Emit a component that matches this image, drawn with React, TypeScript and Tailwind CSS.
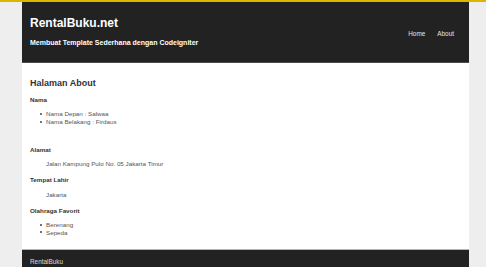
const font = { fontFamily: '"Liberation Sans", Arial, sans-serif' };

const Header = () => (
  <header className="h-[61px] bg-[#222222] border-b border-[#4a4a4a] flex justify-between px-[8px]">
    <div className="pt-[14px]">
      <h1 className="text-[12px] leading-[14px] font-bold text-white">RentalBuku.net</h1>
      <p className="mt-[8px] text-[7px] leading-[9px] font-bold text-white">
        Membuat Template Sederhana dengan Codeigniter
      </p>
    </div>
    <nav className="flex items-center gap-[12px] pr-[7px] pt-[3px] text-[6.4px] text-[#e5e5e5]">
      <a href="#">Home</a>
      <a href="#">About</a>
    </nav>
  </header>
);

const Label = ({ children, className = '' }: { children: React.ReactNode; className?: string }) => (
  <h3 className={'text-[6.25px] leading-[8px] font-bold text-[#333333] ' + className}>{children}</h3>
);

const Bullets = ({ items, className = '' }: { items: string[]; className?: string }) => (
  <ul className={'pl-[10px] ' + className}>
    {items.map((item) => (
      <li key={item} className="flex items-center gap-[4px]">
        <span className="w-[2px] h-[2px] rounded-full bg-[#444444]" />
        {item}
      </li>
    ))}
  </ul>
);

export default function App() {
  return (
    <div style={font} className="min-h-[267px] bg-[#eeeeee] border-t-2 border-[#d9b600]">
      <div className="ml-[22px] w-[447px]">
        <Header />
        <main className="bg-white px-[8px] pt-[15px] pb-[13px] text-[6.25px] leading-[7.7px] text-[#555555]">
          <h2 className="text-[9px] leading-[11px] font-bold text-[#333333]">Halaman About</h2>
          <Label className="mt-[7px]">Nama</Label>
          <Bullets className="mt-[6px]" items={['Nama Depan : Salwaa', 'Nama Belakang : Firdaus']} />
          <Label className="mt-[21px]">Alamat</Label>
          <p className="pl-[16px] mt-[6px]">Jalan Kampung Pulo No. 05 Jakarta Timur</p>
          <Label className="mt-[8px]">Tempat Lahir</Label>
          <p className="pl-[16px] mt-[7px]">Jakarta</p>
          <Label className="mt-[8px]">Olahraga Favorit</Label>
          <Bullets className="mt-[6px]" items={['Berenang', 'Sepeda']} />
        </main>
        <footer className="bg-[#222222] border-t border-[#b5b5b5] px-[8px] pt-[8px] pb-[10px] text-[6.4px] leading-[8px] text-[#dddddd]">
          RentalBuku
        </footer>
      </div>
    </div>
  );
}
